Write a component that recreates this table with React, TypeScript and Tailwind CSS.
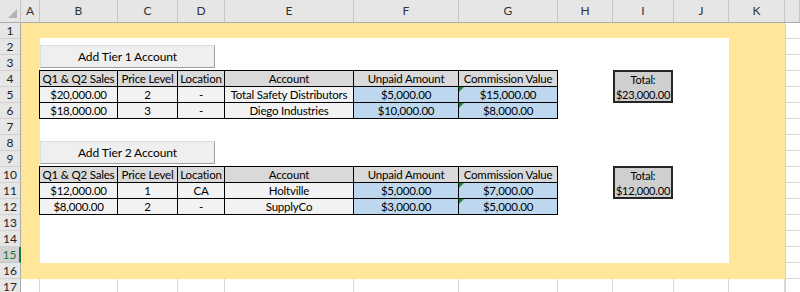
import React from "react";

const colHeaders: { w: string; label: string }[] = [
  { w: "w-[21px]", label: "" },
  { w: "w-[19px]", label: "A" },
  { w: "w-[78px]", label: "B" },
  { w: "w-[60px]", label: "C" },
  { w: "w-[47px]", label: "D" },
  { w: "w-[129px]", label: "E" },
  { w: "w-[105px]", label: "F" },
  { w: "w-[99px]", label: "G" },
  { w: "w-[55px]", label: "H" },
  { w: "w-[61px]", label: "I" },
  { w: "w-[55px]", label: "J" },
  { w: "w-[56px]", label: "K" },
  { w: "w-[15px]", label: "" },
];

const rowNums = Array.from({ length: 17 }, (_, i) => i + 1);

const tableHeaders = [
  "Q1 & Q2 Sales",
  "Price Level",
  "Location",
  "Account",
  "Unpaid Amount",
  "Commission Value",
];

function ColumnHeaders() {
  return (
    <div className="flex h-[23px] bg-[#e6e6e6] border-b border-[#ababab]">
      {colHeaders.map((c, i) => (
        <div
          key={i}
          className={`${c.w} shrink-0 h-full border-r border-[#c6c6c6] flex items-center justify-center text-[12px] text-[#333] relative`}
        >
          {i === 0 ? (
            <svg width="21" height="22" viewBox="0 0 21 22" className="absolute inset-0">
              <polygon points="17,9 17,18 8,18" fill="#b4b4b4" />
            </svg>
          ) : (
            c.label
          )}
        </div>
      ))}
    </div>
  );
}

function RowHeaders() {
  return (
    <div className="flex flex-col w-[21px] shrink-0 bg-[#e6e6e6] border-r border-[#ababab]">
      {rowNums.map((n) =>
        n === 15 ? (
          <div
            key={n}
            className="h-[16px] shrink-0 border-b border-[#c6c6c6] bg-[#d2d2d2] text-[#217346] text-[12px] leading-[15px] text-center relative -mr-px border-r-2 border-r-[#217346]"
          >
            {n}
          </div>
        ) : (
          <div
            key={n}
            className="h-[16px] shrink-0 border-b border-[#d0d0d0] text-[#222] text-[12px] leading-[15px] text-center"
          >
            {n}
          </div>
        )
      )}
    </div>
  );
}

function Triangle() {
  return (
    <span className="absolute top-0 left-0 w-0 h-0 border-t-[5px] border-t-[#1e8a3c] border-r-[5px] border-r-transparent" />
  );
}

function DataTable({ pos, rows }: { pos: string; rows: string[][] }) {
  return (
    <div
      className={`${pos} -mt-px -ml-px border-t border-l border-black grid grid-cols-[78px_60px_47px_129px_105px_99px] auto-rows-[16px] text-[11.5px] tracking-[-0.2px] leading-[15px]`}
    >
      {tableHeaders.map((h) => (
        <div
          key={h}
          className="bg-[#d9d9d9] border-r border-b border-black text-center whitespace-nowrap overflow-hidden"
        >
          {h}
        </div>
      ))}
      {rows.map((r, ri) =>
        r.map((v, ci) => (
          <div
            key={`${ri}-${ci}`}
            className={`${
              ci >= 4 ? "bg-[#bdd7ee]" : "bg-[#f2f2f2]"
            } relative border-r border-b border-black text-center whitespace-nowrap overflow-hidden`}
          >
            {ci === 5 && <Triangle />}
            {v}
          </div>
        ))
      )}
    </div>
  );
}

function SheetButton({ pos, label }: { pos: string; label: string }) {
  return (
    <div className={`${pos}`}>
      <div className="mt-[6px] w-[175px] h-[23px] bg-[#efefef] border border-[#dcdcdc] border-r-[#9f9f9f] border-b-[#9f9f9f] flex items-center justify-center text-[12px] tracking-[-0.1px]">
        {label}
      </div>
    </div>
  );
}

function TotalBox({ pos, value }: { pos: string; value: string }) {
  return (
    <div className={`${pos} -mt-px`}>
      <div className="w-[60px] h-[33px] border-2 border-[#262626] bg-[#d0cece] flex flex-col items-center justify-center text-[11px] tracking-[-0.2px] leading-[15px] whitespace-nowrap">
        <div>Total:</div>
        <div>{value}</div>
      </div>
    </div>
  );
}

const row17Cells = [
  "w-[19px]",
  "w-[78px]",
  "w-[60px]",
  "w-[47px]",
  "w-[129px]",
  "w-[105px]",
  "w-[99px]",
  "w-[55px]",
  "w-[61px]",
  "w-[55px]",
  "w-[56px]",
];

function Sheet() {
  return (
    <div className="grid w-[779px] shrink-0 grid-cols-[19px_78px_60px_47px_129px_105px_99px_55px_61px_55px_56px_15px] grid-rows-[repeat(17,16px)]">
      <div className="col-start-1 col-end-12 row-start-1 row-end-17 bg-[#ffe699]" />
      <div className="col-start-2 col-end-11 row-start-2 row-end-16 -mt-px bg-white" />
      <div className="col-start-12 row-start-1 row-end-18 flex flex-col border-l border-[#d4d4d4]">
        {rowNums.map((n) => (
          <div key={n} className="h-[16px] shrink-0 border-b border-[#d9d9d9]" />
        ))}
      </div>
      <div className="col-start-1 col-end-12 row-start-17 flex">
        {row17Cells.map((w, i) => (
          <div key={i} className={`${w} shrink-0 h-full border-r border-b border-[#d9d9d9]`} />
        ))}
      </div>

      <SheetButton pos="col-start-2 col-end-5 row-start-2 row-end-4" label="Add Tier 1 Account" />
      <DataTable
        pos="col-start-2 col-end-8 row-start-4 row-end-7"
        rows={[
          ["$20,000.00", "2", "-", "Total Safety Distributors", "$5,000.00", "$15,000.00"],
          ["$18,000.00", "3", "-", "Diego Industries", "$10,000.00", "$8,000.00"],
        ]}
      />
      <TotalBox pos="col-start-9 row-start-4 row-end-6" value="$23,000.00" />

      <SheetButton pos="col-start-2 col-end-5 row-start-8 row-end-10" label="Add Tier 2 Account" />
      <DataTable
        pos="col-start-2 col-end-8 row-start-10 row-end-13"
        rows={[
          ["$12,000.00", "1", "CA", "Holtville", "$5,000.00", "$7,000.00"],
          ["$8,000.00", "2", "-", "SupplyCo", "$3,000.00", "$5,000.00"],
        ]}
      />
      <TotalBox pos="col-start-9 row-start-10 row-end-12" value="$12,000.00" />
    </div>
  );
}

export default function App() {
  return (
    <div className="w-[800px] h-[292px] overflow-hidden bg-white text-black [font-family:Lato,'Liberation_Sans',sans-serif]">
      <ColumnHeaders />
      <div className="flex">
        <RowHeaders />
        <Sheet />
      </div>
    </div>
  );
}
